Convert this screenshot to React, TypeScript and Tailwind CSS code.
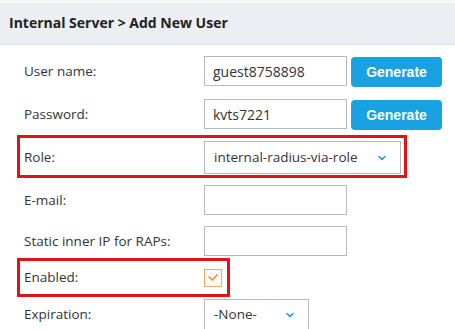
import { ChevronDown } from "lucide-react";

const labelCls = "w-[180px] shrink-0 text-[13.5px] text-[#333]";
const inputCls =
  "h-[30px] w-[143px] border border-[#b8b8b8] bg-white px-[8px] text-[14px] text-[#333] outline-none";

const GenerateButton = () => (
  <button
    className="ml-[4px] mt-px h-[30px] w-[91px] rounded-[4px] bg-[#19a2e1] text-[14px] font-bold text-white"
    style={{ fontFamily: '"Liberation Sans", Arial, sans-serif' }}
  >
    Generate
  </button>
);

const Select = ({ value, width }: { value: string; width: string }) => (
  <div
    className={`flex h-full items-center justify-between border border-[#b8b8b8] bg-white pl-[9px] pr-[12px] text-[13.5px] text-[#333] ${width}`}
  >
    <span>{value}</span>
    <ChevronDown size={12} strokeWidth={3} className="text-[#1a9ad6]" />
  </div>
);

export default function App() {
  return (
    <div
      className="h-[329px] w-[455px] overflow-hidden bg-white"
      style={{ fontFamily: '"Open Sans", "Noto Sans", sans-serif' }}
    >
      {/* title bar */}
      <div className="h-[45px] border-t-[3px] border-b border-t-[#f5f6f8] border-b-[#dcdfe4] bg-[#ebeef2] pl-[9px]">
        <h1 className="pt-[9px] text-[14px] font-bold text-[#222]">Internal Server &gt; Add New User</h1>
      </div>

      <div className="pl-[24px] pt-[11px]">
        <div className="flex items-start">
          <div className={`${labelCls} leading-[30px]`}>User name:</div>
          <input className={inputCls} defaultValue="guest8758898" />
          <GenerateButton />
        </div>

        <div className="mt-[12px] flex items-start">
          <div className={`${labelCls} leading-[30px]`}>Password:</div>
          <input className={inputCls} defaultValue="kvts7221" />
          <GenerateButton />
        </div>

        {/* highlighted row */}
        <div className="ml-[-7px] mt-[5px] flex h-[43px] w-[390px] items-stretch border-[3px] border-[#e0121b] pb-[1px] pl-[4px] pr-[3px] pt-[3px]">
          <div className={`${labelCls} self-center`}>Role:</div>
          <Select value="internal-radius-via-role" width="w-[197px]" />
        </div>

        <div className="mt-[7px] flex items-center">
          <div className={labelCls}>E-mail:</div>
          <input className={inputCls} />
        </div>

        <div className="mt-[11px] flex items-center">
          <div className={labelCls}>Static inner IP for RAPs:</div>
          <input className={inputCls} />
        </div>

        <div className="ml-[-7px] mt-[2px] flex h-[39px] w-[213px] items-center border-[3px] border-[#e0121b] pl-[4px]">
          <div className={labelCls}>Enabled:</div>
          <div className="flex h-[18px] w-[18px] items-center justify-center border border-[#f3a86a] bg-[#fffaf5]">
            <svg width="12" height="9" viewBox="0 0 12 9" fill="none">
              <path d="M1.5 3.5 L5.5 7 L10.5 1.5" stroke="#f0872a" strokeWidth="1.5" />
            </svg>
          </div>
        </div>

        <div className="mt-[2px] flex h-[31px] items-center">
          <div className={labelCls}>Expiration:</div>
          <Select value="-None-" width="w-[105px]" />
        </div>
      </div>
    </div>
  );
}
